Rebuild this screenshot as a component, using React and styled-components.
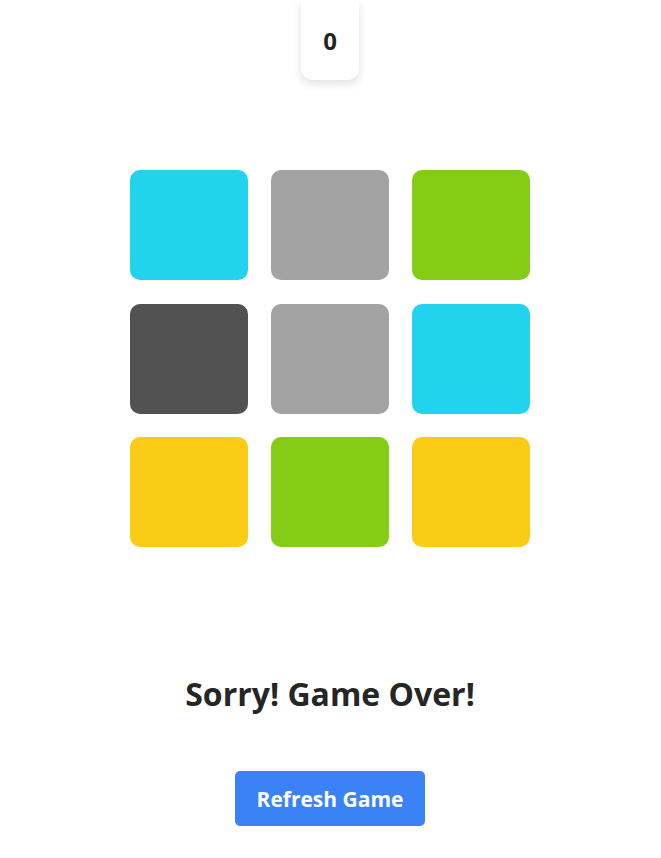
import React, { useState } from 'react';
import styled, { createGlobalStyle } from 'styled-components';

const GlobalStyle = createGlobalStyle`
  body {
    margin: 0;
    background: #ffffff;
    font-family: "Open Sans", "Noto Sans", sans-serif;
  }
`;

const tiles = [
  '#22d3ee', '#a3a3a3', '#84cc16',
  '#525252', '#a3a3a3', '#22d3ee',
  '#facc15', '#84cc16', '#facc15',
];

function App() {
  const [score] = useState(0);

  return (
    <Page>
      <GlobalStyle />
      <ScoreCard>{score}</ScoreCard>
      <Board>
        {tiles.map((color, i) => (
          <Tile key={i} $color={color} />
        ))}
      </Board>
      <Message>Sorry! Game Over!</Message>
      <RefreshButton>Refresh Game</RefreshButton>
    </Page>
  );
}

export default App;

const Page = styled.div`
  display: flex;
  flex-direction: column;
  align-items: center;
  width: 660px;
`;

const ScoreCard = styled.div`
  width: 58px;
  height: 80px;
  display: flex;
  align-items: center;
  justify-content: center;
  background: #fff;
  border-radius: 0 0 12px 12px;
  box-shadow: 0 4px 10px rgba(0, 0, 0, 0.12);
  font-size: 24px;
  font-weight: 700;
  color: #222;
`;

const Board = styled.div`
  margin-top: 90px;
  display: grid;
  grid-template-columns: repeat(3, 118px);
  grid-auto-rows: 110px;
  gap: 23.5px 23px;
`;

const Tile = styled.div`
  background: ${(p) => p.$color};
  border-radius: 10px;
`;

const Message = styled.h2`
  margin: 125px 0 0;
  font-size: 32px;
  line-height: 44px;
  font-weight: 700;
  color: #262626;
`;

const RefreshButton = styled.button`
  margin-top: 55px;
  width: 190px;
  height: 55px;
  border: none;
  border-radius: 5px;
  background: #3b82f6;
  color: #fff;
  font-family: inherit;
  font-size: 21px;
  font-weight: 700;
  cursor: pointer;
`;
